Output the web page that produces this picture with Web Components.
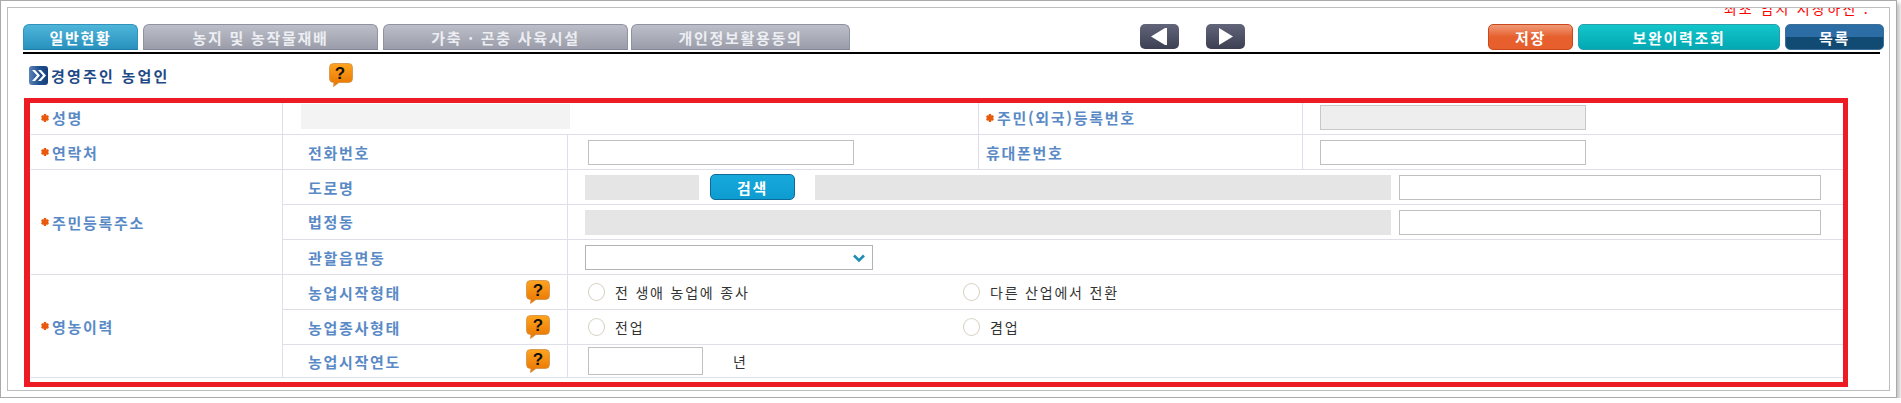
<!DOCTYPE html>
<html lang="ko">
<head>
<meta charset="utf-8">
<title>일반현황</title>
<style>
  html, body { margin: 0; background: #fff; }
  body { font-family: "Noto Sans CJK KR", "Liberation Sans", sans-serif; overflow: hidden; }
</style>
</head>
<body>
<farm-window>
  <farm-notice>최초 임시 저장하신 .</farm-notice>

  <farm-toolbar>
    <farm-tab slot="tabs" active style="width:115px">일반현황</farm-tab>
    <farm-tab slot="tabs" style="width:235px;margin-left:5px">농지 및 농작물재배</farm-tab>
    <farm-tab slot="tabs" style="width:245px;margin-left:5px">가축 · 곤충 사육시설</farm-tab>
    <farm-tab slot="tabs" style="width:219px;margin-left:3px">개인정보활용동의</farm-tab>
    <nav-arrow slot="nav" dir="prev"></nav-arrow>
    <nav-arrow slot="nav" dir="next"></nav-arrow>
    <farm-button slot="actions" kind="orange" style="width:85px">저장</farm-button>
    <farm-button slot="actions" kind="teal" style="width:202px">보완이력조회</farm-button>
    <farm-button slot="actions" kind="navy" style="width:99px">목록</farm-button>
  </farm-toolbar>

  <section-title>경영주인 농업인</section-title>

  <form-box>
    <!-- row 1 -->
    <form-cell style="grid-area:1/1/2/2" pad="10"><field-label star style="margin-top:-2px">성명</field-label></form-cell>
    <form-cell style="grid-area:1/2/2/4" pad="18"><grey-box w="269" h="25" shade="#f3f3f3" style="margin-top:-5px"></grey-box></form-cell>
    <form-cell style="grid-area:1/4/2/5" pad="7"><field-label star style="margin-top:-2px">주민(외국)등록번호</field-label></form-cell>
    <form-cell style="grid-area:1/5/2/6" pad="17" last><text-field w="266" h="25" disabled style="margin-top:-3px"></text-field></form-cell>

    <!-- row 2 -->
    <form-cell style="grid-area:2/1/3/2" pad="10"><field-label star>연락처</field-label></form-cell>
    <form-cell style="grid-area:2/2/3/3" pad="25"><field-label>전화번호</field-label></form-cell>
    <form-cell style="grid-area:2/3/3/4" pad="20"><text-field w="266" h="25"></text-field></form-cell>
    <form-cell style="grid-area:2/4/3/5" pad="7"><field-label>휴대폰번호</field-label></form-cell>
    <form-cell style="grid-area:2/5/3/6" pad="17" last><text-field w="266" h="25"></text-field></form-cell>

    <!-- address -->
    <form-cell style="grid-area:3/1/6/2" pad="10"><field-label star>주민등록주소</field-label></form-cell>
    <form-cell style="grid-area:3/2/4/3" pad="25"><field-label>도로명</field-label></form-cell>
    <form-cell style="grid-area:3/3/4/6" pad="17" last>
      <grey-box w="114" h="25"></grey-box>
      <farm-button kind="search" style="width:85px;height:26px;margin-left:11px">검색</farm-button>
      <grey-box w="576" h="25" style="margin-left:20px"></grey-box>
      <text-field w="422" h="25" style="margin-left:8px"></text-field>
    </form-cell>
    <form-cell style="grid-area:4/2/5/3" pad="25"><field-label style="margin-top:-2px">법정동</field-label></form-cell>
    <form-cell style="grid-area:4/3/5/6" pad="17" last>
      <grey-box w="806" h="25"></grey-box>
      <text-field w="422" h="25" style="margin-left:8px"></text-field>
    </form-cell>
    <form-cell style="grid-area:5/2/6/3" pad="25"><field-label>관할읍면동</field-label></form-cell>
    <form-cell style="grid-area:5/3/6/6" pad="17" last><select-field></select-field></form-cell>

    <!-- farming history -->
    <form-cell style="grid-area:6/1/9/2" pad="10"><field-label star>영농이력</field-label></form-cell>
    <form-cell style="grid-area:6/2/7/3" pad="25"><field-label>농업시작형태</field-label><help-icon style="margin-left:auto;margin-right:17px"></help-icon></form-cell>
    <form-cell style="grid-area:6/3/7/6" pad="20" last>
      <radio-item style="width:375px">전 생애 농업에 종사</radio-item>
      <radio-item>다른 산업에서 전환</radio-item>
    </form-cell>
    <form-cell style="grid-area:7/2/8/3" pad="25"><field-label>농업종사형태</field-label><help-icon style="margin-left:auto;margin-right:17px"></help-icon></form-cell>
    <form-cell style="grid-area:7/3/8/6" pad="20" last>
      <radio-item style="width:375px">전업</radio-item>
      <radio-item>겸업</radio-item>
    </form-cell>
    <form-cell style="grid-area:8/2/9/3" pad="25"><field-label>농업시작연도</field-label><help-icon style="margin-left:auto;margin-right:17px"></help-icon></form-cell>
    <form-cell style="grid-area:8/3/9/6" pad="20" last>
      <text-field w="115" h="28"></text-field>
      <plain-text style="margin-left:30px">년</plain-text>
    </form-cell>
  </form-box>
</farm-window>

<script>
// small helper so every element gets an open shadow root with its own styles
function defineEl(name, render) {
  customElements.define(name, class extends HTMLElement {
    connectedCallback() {
      if (this.shadowRoot) return;
      this.attachShadow({ mode: "open" });
      this.shadowRoot.innerHTML = render(this);
    }
  });
}

defineEl("farm-window", () => `
  <style>
    :host { display: block; width: 1883px; height: 384px; border: 1px solid #aaa; box-shadow: 3px 3px 4px #c4c4c4; background: #fff; padding: 6px; }
    .inner { border: 1px solid #bdbdbd; height: 382px; width: 1881px; overflow: hidden; background: #fff; }
  </style>
  <div class="inner"><slot></slot></div>`);

defineEl("farm-notice", () => `
  <style>
    :host { display: block; height: 16px; overflow: hidden; text-align: right; padding-right: 19px; }
    span { display: block; margin-top: -9px; color: #f00; font-size: 14px; line-height: 18px; letter-spacing: 2.3px; }
  </style>
  <span><slot></slot></span>`);

defineEl("farm-toolbar", () => `
  <style>
    :host { display: flex; margin-left: 15px; width: 1857px; height: 26px; padding-bottom: 2px; border-bottom: 2px solid #000; }
    .tabs, .nav, .actions { display: flex; }
    .nav { margin-left: 290px; gap: 27px; }
    .actions { margin-left: auto; margin-right: -4px; gap: 5px; }
  </style>
  <div class="tabs"><slot name="tabs"></slot></div>
  <div class="nav"><slot name="nav"></slot></div>
  <div class="actions"><slot name="actions"></slot></div>`);

defineEl("farm-tab", () => `
  <style>
    :host { display: flex; align-items: center; justify-content: center; box-sizing: border-box; height: 26px; border-radius: 6px 6px 0 0; font-size: 15px; font-weight: 700; letter-spacing: 1.7px; color: #eceef2; border: 1px solid #8f92a0; border-bottom-color: #83869a; background: linear-gradient(#bcbec9, #9a9ca9); }
    :host([active]) { color: #fff; border-color: #2f93bb; border-bottom-color: #1f7ea8; background: linear-gradient(#4fb5da, #2791bd); }
  </style>
  <slot></slot>`);

defineEl("nav-arrow", (el) => `
  <style>
    :host { display: block; width: 39px; height: 25px; border-radius: 5px; background: linear-gradient(#62657a, #3d4052); }
    svg { display: block; }
  </style>
  <svg width="39" height="25" viewBox="0 0 39 25">
    <path fill="#fff" d="${el.getAttribute("dir") === "prev" ? "M27 4v17h-2L11 12.500 25 4z" : "M13 4v17l14-8.500z"}"/>
  </svg>`);

defineEl("farm-button", (el) => {
  const looks = {
    orange: "border:1px solid #c9491c;background:linear-gradient(#f09a78,#e65f2d 50%,#e65f2d);",
    teal: "border:1px solid #2a9fac;background:linear-gradient(#13c6ca,#02a8b3);",
    navy: "border:1px solid #3a6f97;background:linear-gradient(#2d6da6 50%,#114a72 50%);",
    search: "border:1px solid #0f6a9c;background:linear-gradient(#18a9dc,#0d9ccf);",
  };
  return `
  <style>
    :host { display: flex; align-items: center; justify-content: center; box-sizing: border-box; height: 26px; border-radius: 5px; color: #fff; font-size: 15px; font-weight: 700; letter-spacing: 1.7px; ${looks[el.getAttribute("kind")]} }
  </style>
  <slot></slot>`;
});

defineEl("section-title", () => `
  <style>
    :host { display: flex; align-items: center; height: 42px; padding: 0 0 2px 21px; color: #1f4a85; font-size: 15px; font-weight: 700; letter-spacing: 2.2px; }
    svg { display: block; flex: none; margin-right: 3px; }
    .text { width: 278px; }
  </style>
  <svg width="19" height="19" viewBox="0 0 19 19">
    <defs><linearGradient id="g"><stop offset="0" stop-color="#5b82b8"/><stop offset=".55" stop-color="#1f4f8f"/><stop offset="1" stop-color="#17407a"/></linearGradient></defs>
    <rect width="19" height="19" rx="3" fill="url(#g)"/>
    <path fill="#fff" d="M3 4h3l5 5.500L6 15H3l5-5.500zM9 4h3l5 5.500-5 5.500H9l5-5.500z"/>
  </svg>
  <span class="text"><slot></slot></span>
  <help-icon></help-icon>`);

defineEl("help-icon", () => `
  <style>
    :host { display: block; flex: none; width: 24px; height: 24px; }
    svg { display: block; }
    text { font: 700 17px "Liberation Sans", sans-serif; fill: #111; }
  </style>
  <svg width="24" height="24" viewBox="0 0 24 24">
    <defs><linearGradient id="o" x2="0" y2="1"><stop offset="0" stop-color="#ffa41f"/><stop offset="1" stop-color="#e87400"/></linearGradient></defs>
    <path fill="url(#o)" stroke="#cf8f45" stroke-width=".8" d="M4.500.5h15a4 4 0 0 1 4 4v11a4 4 0 0 1-4 4H10L4.500 23.500l.5-4H4.500a4 4 0 0 1-4-4v-11a4 4 0 0 1 4-4z"/>
    <text x="12" y="15.500" text-anchor="middle">?</text>
  </svg>`);

defineEl("form-box", () => `
  <style>
    :host { display: grid; box-sizing: border-box; margin-left: 16px; width: 1824px; height: 289px; border: solid #ed1c24; border-width: 5px 5px 5px 6px; padding: 0 0 0 1px; grid-template-columns: 252px 285px 411px 324px 540px; grid-template-rows: 32px 35px 35px 35px 35px 35px 35px 33px; align-content: start; }
  </style>
  <slot></slot>`);

defineEl("form-cell", (el) => `
  <style>
    :host { display: flex; align-items: center; box-sizing: border-box; min-width: 0; padding-left: ${el.getAttribute("pad") || 0}px; border-bottom: 1px solid #dedfe8; border-right: ${el.hasAttribute("last") ? 0 : "1px solid #dedfe8"}; }
  </style>
  <slot></slot>`);

defineEl("field-label", (el) => `
  <style>
    :host { display: inline-flex; align-items: center; color: #5a8ac6; font-size: 15px; font-weight: 700; letter-spacing: 1.7px; white-space: nowrap; }
    svg { display: block; margin-right: 3px; }
  </style>
  ${el.hasAttribute("star") ? `<svg width="8" height="8" viewBox="0 0 8 8"><path fill="#e8590c" d="M3 0h2l.4 1.500L7 1.200 8 3 6.800 4 8 5 7 6.800l-1.600-.3L5 8H3l-.4-1.500-1.600.3L0 5l1.200-1L0 3l1-1.800 1.600.3z"/></svg>` : ""}
  <slot></slot>`);

defineEl("grey-box", (el) => `
  <style>
    :host { display: block; flex: none; width: ${el.getAttribute("w")}px; height: ${el.getAttribute("h")}px; background: ${el.getAttribute("shade") || "#e5e5e5"}; }
  </style>`);

defineEl("text-field", (el) => `
  <style>
    :host { display: block; flex: none; width: ${el.getAttribute("w")}px; height: ${el.getAttribute("h")}px; }
    input { display: block; box-sizing: border-box; width: 100%; height: 100%; margin: 0; border: 1px solid #c0c0c0; background: #fff; outline: 0; }
    input:disabled { background: #eee; border-color: #c8c8c8; }
  </style>
  <input type="text" ${el.hasAttribute("disabled") ? "disabled" : ""}>`);

defineEl("select-field", () => `
  <style>
    :host { display: block; position: relative; width: 288px; height: 25px; }
    select { display: block; box-sizing: border-box; width: 100%; height: 100%; margin: 0; border: 1px solid #b4b4b4; background: #fff; appearance: none; -webkit-appearance: none; border-radius: 0; outline: 0; }
    svg { position: absolute; right: 8px; top: 9px; pointer-events: none; }
  </style>
  <select><option></option></select>
  <svg width="12" height="9" viewBox="0 0 12 9"><path fill="none" stroke="#1f8db5" stroke-width="2.600" d="M1 1.500l5 5 5-5"/></svg>`);

defineEl("radio-item", () => `
  <style>
    :host { display: flex; align-items: center; flex: none; color: #333; font-size: 14px; letter-spacing: 1.8px; white-space: nowrap; }
    input { appearance: none; -webkit-appearance: none; box-sizing: border-box; flex: none; width: 17px; height: 18px; margin: 0 10px 0 0; border: 1px solid #d6d0c4; border-radius: 50%; background: #fff; outline: 0; }
  </style>
  <input type="radio"><slot></slot>`);

defineEl("plain-text", () => `
  <style>
    :host { display: inline-block; color: #333; font-size: 14px; letter-spacing: 1.8px; }
  </style>
  <slot></slot>`);
</script>
</body>
</html>
